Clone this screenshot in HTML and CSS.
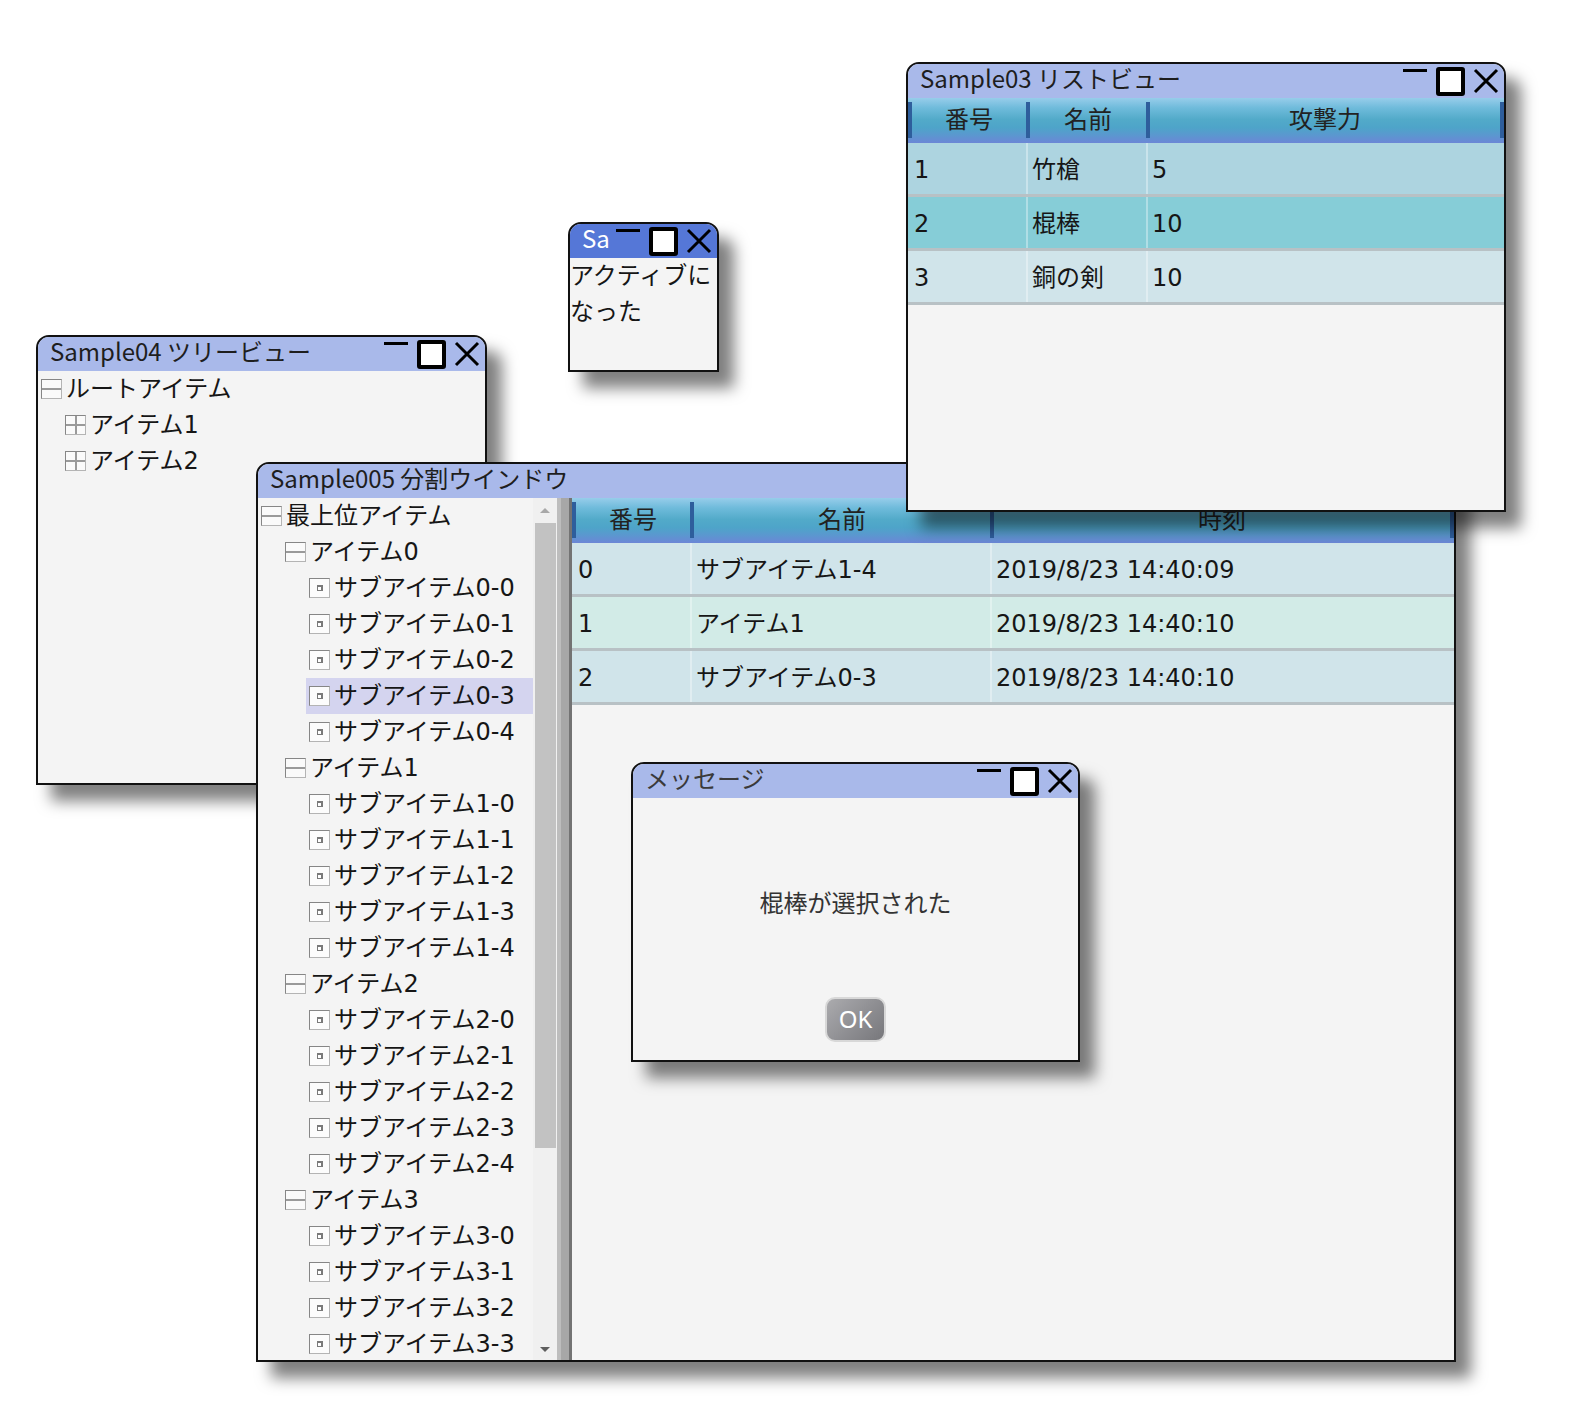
FILE: index.html
```html
<!DOCTYPE html>
<html lang="ja">
<head>
<meta charset="utf-8">
<title>Windows</title>
<link rel="stylesheet" href="styles.css">
</head>
<body>
<div class="desktop">

  <!-- Sample04 ツリービュー -->
  <section class="win w-tree">
    <header class="titlebar">
      <div class="title">Sample04 ツリービュー</div>
      <div class="ctrls"><span class="c-min"></span><span class="c-max"></span><svg class="c-close" viewBox="0 0 26 26"><path d="M2 2L24 24M24 2L2 24" stroke="#000" stroke-width="3" fill="none"/></svg></div>
    </header>
    <div class="tree-body">
      <div class="node l0"><div class="item"><span class="tbox minus"></span><span class="label">ルートアイテム</span></div></div>
      <div class="node l1"><div class="item"><span class="tbox plus"></span><span class="label">アイテム1</span></div></div>
      <div class="node l1"><div class="item"><span class="tbox plus"></span><span class="label">アイテム2</span></div></div>
    </div>
  </section>

  <!-- Sample005 分割ウインドウ -->
  <section class="win w-split">
    <header class="titlebar">
      <div class="title">Sample005 分割ウインドウ</div>
    </header>
    <div class="split-body">
      <div class="tree">
        <div class="node l0"><div class="item"><span class="tbox minus"></span><span class="label">最上位アイテム</span></div></div>
        <div class="node l1"><div class="item"><span class="tbox minus"></span><span class="label">アイテム0</span></div></div>
        <div class="node l2"><div class="item"><span class="tbox leaf"></span><span class="label">サブアイテム0-0</span></div></div>
        <div class="node l2"><div class="item"><span class="tbox leaf"></span><span class="label">サブアイテム0-1</span></div></div>
        <div class="node l2"><div class="item"><span class="tbox leaf"></span><span class="label">サブアイテム0-2</span></div></div>
        <div class="node l2"><div class="item sel"><span class="tbox leaf"></span><span class="label">サブアイテム0-3</span></div></div>
        <div class="node l2"><div class="item"><span class="tbox leaf"></span><span class="label">サブアイテム0-4</span></div></div>
        <div class="node l1"><div class="item"><span class="tbox minus"></span><span class="label">アイテム1</span></div></div>
        <div class="node l2"><div class="item"><span class="tbox leaf"></span><span class="label">サブアイテム1-0</span></div></div>
        <div class="node l2"><div class="item"><span class="tbox leaf"></span><span class="label">サブアイテム1-1</span></div></div>
        <div class="node l2"><div class="item"><span class="tbox leaf"></span><span class="label">サブアイテム1-2</span></div></div>
        <div class="node l2"><div class="item"><span class="tbox leaf"></span><span class="label">サブアイテム1-3</span></div></div>
        <div class="node l2"><div class="item"><span class="tbox leaf"></span><span class="label">サブアイテム1-4</span></div></div>
        <div class="node l1"><div class="item"><span class="tbox minus"></span><span class="label">アイテム2</span></div></div>
        <div class="node l2"><div class="item"><span class="tbox leaf"></span><span class="label">サブアイテム2-0</span></div></div>
        <div class="node l2"><div class="item"><span class="tbox leaf"></span><span class="label">サブアイテム2-1</span></div></div>
        <div class="node l2"><div class="item"><span class="tbox leaf"></span><span class="label">サブアイテム2-2</span></div></div>
        <div class="node l2"><div class="item"><span class="tbox leaf"></span><span class="label">サブアイテム2-3</span></div></div>
        <div class="node l2"><div class="item"><span class="tbox leaf"></span><span class="label">サブアイテム2-4</span></div></div>
        <div class="node l1"><div class="item"><span class="tbox minus"></span><span class="label">アイテム3</span></div></div>
        <div class="node l2"><div class="item"><span class="tbox leaf"></span><span class="label">サブアイテム3-0</span></div></div>
        <div class="node l2"><div class="item"><span class="tbox leaf"></span><span class="label">サブアイテム3-1</span></div></div>
        <div class="node l2"><div class="item"><span class="tbox leaf"></span><span class="label">サブアイテム3-2</span></div></div>
        <div class="node l2"><div class="item"><span class="tbox leaf"></span><span class="label">サブアイテム3-3</span></div></div>
      </div>
      <div class="vscroll">
        <span class="arr-up"></span>
        <span class="thumb"></span>
        <span class="spacer"></span>
        <span class="arr-down"></span>
      </div>
      <div class="splitter"></div>
      <div class="listview">
        <div class="lv-head">
          <div class="hcell s1"><span class="sep"></span><span class="hl">番号</span></div>
          <div class="hcell s2"><span class="sep"></span><span class="hl">名前</span></div>
          <div class="hcell s3"><span class="sep"></span><span class="hl">時刻</span></div>
          <span class="sep end"></span>
        </div>
        <div class="lv-row r-blue">
          <div class="cell s1">0</div><div class="cell s2">サブアイテム1-4</div><div class="cell s3">2019/8/23 14:40:09</div>
        </div>
        <div class="lv-row r-mint">
          <div class="cell s1">1</div><div class="cell s2">アイテム1</div><div class="cell s3">2019/8/23 14:40:10</div>
        </div>
        <div class="lv-row r-blue">
          <div class="cell s1">2</div><div class="cell s2">サブアイテム0-3</div><div class="cell s3">2019/8/23 14:40:10</div>
        </div>
      </div>
    </div>
  </section>

  <!-- Active small window -->
  <section class="win w-active">
    <header class="titlebar active">
      <div class="title">Sample</div>
      <div class="ctrls"><span class="c-min"></span><span class="c-max"></span><svg class="c-close" viewBox="0 0 26 26"><path d="M2 2L24 24M24 2L2 24" stroke="#000" stroke-width="3" fill="none"/></svg></div>
    </header>
    <div class="active-body">アクティブに<br>なった</div>
  </section>

  <!-- Sample03 リストビュー -->
  <section class="win w-list">
    <header class="titlebar">
      <div class="title">Sample03 リストビュー</div>
      <div class="ctrls"><span class="c-min"></span><span class="c-max"></span><svg class="c-close" viewBox="0 0 26 26"><path d="M2 2L24 24M24 2L2 24" stroke="#000" stroke-width="3" fill="none"/></svg></div>
    </header>
    <div class="listview">
      <div class="lv-head">
        <div class="hcell t1"><span class="sep"></span><span class="hl">番号</span></div>
        <div class="hcell t2"><span class="sep"></span><span class="hl">名前</span></div>
        <div class="hcell t3"><span class="sep"></span><span class="hl">攻撃力</span></div>
        <span class="sep end"></span>
      </div>
      <div class="lv-row r-sky">
        <div class="cell t1">1</div><div class="cell t2">竹槍</div><div class="cell t3">5</div>
      </div>
      <div class="lv-row r-teal">
        <div class="cell t1">2</div><div class="cell t2">棍棒</div><div class="cell t3">10</div>
      </div>
      <div class="lv-row r-blue">
        <div class="cell t1">3</div><div class="cell t2">銅の剣</div><div class="cell t3">10</div>
      </div>
    </div>
  </section>

  <!-- メッセージ dialog -->
  <section class="win w-dialog">
    <header class="titlebar">
      <div class="title dim">メッセージ</div>
      <div class="ctrls"><span class="c-min"></span><span class="c-max"></span><svg class="c-close" viewBox="0 0 26 26"><path d="M2 2L24 24M24 2L2 24" stroke="#000" stroke-width="3" fill="none"/></svg></div>
    </header>
    <div class="dlg-body">
      <div class="msg">棍棒が選択された</div>
      <div class="ok">OK</div>
    </div>
  </section>

</div>
</body>
</html>
```

FILE: styles.css
```css
* { box-sizing: border-box; }

html, body {
  margin: 0;
  padding: 0;
  background: #ffffff;
}

.desktop {
  position: relative;
  width: 1578px;
  height: 1426px;
  overflow: hidden;
  background: #ffffff;
  font-family: "DejaVu Sans", "Noto Sans CJK JP", sans-serif;
  color: #1a1a1a;
}

/* ---------- window frame ---------- */
.win {
  position: absolute;
  display: flex;
  flex-direction: column;
  border: 2px solid #111111;
  border-radius: 13px 13px 0 0;
  background: #f4f4f4;
  box-shadow: 15px 16px 15px rgba(0, 0, 0, 0.5);
}

.w-tree   { left: 36px;  top: 335px; width: 451px;  height: 450px; }
.w-split  { left: 256px; top: 462px; width: 1200px; height: 900px; }
.w-active { left: 568px; top: 222px; width: 151px;  height: 150px; }
.w-list   { left: 906px; top: 62px;  width: 600px;  height: 450px; }
.w-dialog { left: 631px; top: 762px; width: 449px;  height: 300px; }

.titlebar {
  flex: none;
  height: 34px;
  display: flex;
  border-radius: 11px 11px 0 0;
  background: #a9b9ea;
}
.titlebar.active { background: #5577d7; }

.title {
  flex: 1;
  min-width: 0;
  height: 36px;
  margin-top: -4px;
  overflow-x: clip;
  overflow-y: visible;
  white-space: nowrap;
  padding-left: 12px;
  font-family: "Noto Sans CJK JP", sans-serif;
  font-size: 24px;
  line-height: 36px;
  color: #1e1e1e;
}
.titlebar.active .title { color: #ffffff; }
.title.dim { color: #3a3a3a; }

.ctrls {
  flex: none;
  display: flex;
  align-items: flex-start;
  margin-left: 6px;
  padding-right: 5px;
}
.c-min {
  width: 24px;
  height: 3px;
  margin-top: 5px;
  background: #000000;
}
.c-max {
  width: 29px;
  height: 29px;
  margin-top: 3px;
  margin-left: 9px;
  border: 4px solid #000000;
  border-radius: 3px;
  background: #ffffff;
}
.c-close {
  width: 26px;
  height: 26px;
  margin-top: 4px;
  margin-left: 8px;
}

/* ---------- tree ---------- */
.tree-body,
.tree {
  font-size: 24px;
  color: #161616;
}
.tree {
  flex: none;
  width: 275px;
  overflow: hidden;
}
.node {
  display: flex;
  height: 36px;
}
.l1 { padding-left: 24px; }
.l2 { padding-left: 48px; }

.item {
  flex: 1;
  display: flex;
  align-items: center;
  padding-left: 3px;
  white-space: nowrap;
}
.item.sel { background: #d4d4ef; }

.label { line-height: 36px; }

.tbox {
  flex: none;
  width: 21px;
  height: 20px;
  margin-right: 4px;
  border: 1px solid #868686;
  border-right-color: #b4b4b4;
  border-bottom-color: #b4b4b4;
  background-color: #fafafa;
}
.tbox.minus {
  background: linear-gradient(#9a9a9a, #9a9a9a) center / 100% 2px no-repeat, #fafafa;
}
.tbox.plus {
  background:
    linear-gradient(#9a9a9a, #9a9a9a) center / 100% 2px no-repeat,
    linear-gradient(#9a9a9a, #9a9a9a) center / 2px 100% no-repeat,
    #fafafa;
}
.tbox.leaf {
  background:
    linear-gradient(#ffffff, #ffffff) center / 3px 3px no-repeat,
    linear-gradient(#7a7a7a, #7a7a7a) center / 6px 6px no-repeat,
    #fcfcfc;
}

/* ---------- split window body ---------- */
.split-body {
  flex: 1;
  min-height: 0;
  display: flex;
  overflow: hidden;
}
.vscroll {
  flex: none;
  width: 24px;
  display: flex;
  flex-direction: column;
  align-items: center;
  background: #f0f0f0;
}
.arr-up {
  width: 0;
  height: 0;
  margin-top: 10px;
  border-left: 5px solid transparent;
  border-right: 5px solid transparent;
  border-bottom: 5px solid #a8a8a8;
}
.thumb {
  width: 21px;
  height: 625px;
  margin-top: 10px;
  background: #c2c2c2;
}
.spacer { flex: 1; }
.arr-down {
  width: 0;
  height: 0;
  margin-bottom: 8px;
  border-left: 5px solid transparent;
  border-right: 5px solid transparent;
  border-top: 5px solid #5e5e5e;
}
.splitter {
  flex: none;
  width: 15px;
  background: linear-gradient(to right, #bdbdbd 0, #bdbdbd 4px, #a7a7a7 4px, #a7a7a7 12px, #737373 12px);
}

/* ---------- list view ---------- */
.listview {
  flex: 1;
  min-width: 0;
  display: flex;
  flex-direction: column;
}
.lv-head {
  flex: none;
  height: 45px;
  display: flex;
  background: linear-gradient(#97cdea 0%, #6fbbdb 22%, #52aac9 48%, #4ea4c9 66%, #5a98cf 82%, #6c86d6 100%);
}
.hcell {
  display: flex;
  align-items: stretch;
}
.sep {
  flex: none;
  width: 4px;
  margin: 4px 0 5px;
  background: #2e5e9c;
}
.hl {
  flex: 1;
  text-align: center;
  font-family: "Noto Sans CJK JP", sans-serif;
  font-size: 24px;
  line-height: 40px;
  color: #222222;
}

.s1 { flex: none; width: 118px; }
.s2 { flex: none; width: 300px; }
.s3 { flex: 1; }
.t1 { flex: none; width: 118px; }
.t2 { flex: none; width: 120px; }
.t3 { flex: 1; }

.lv-row {
  flex: none;
  height: 54px;
  display: flex;
  border-bottom: 3px solid #b8c1c5;
}
.r-blue { background: #d0e4ea; }
.r-mint { background: #d2ebe7; }
.r-sky  { background: #add4e0; }
.r-teal { background: #86cdd7; }

.cell {
  padding-left: 6px;
  padding-top: 3px;
  font-size: 24px;
  line-height: 48px;
  white-space: nowrap;
  color: #161616;
}
.cell + .cell {
  border-left: 2px solid rgba(255, 255, 255, 0.35);
  padding-left: 4px;
}

/* ---------- active small window ---------- */
.active-body {
  font-size: 24px;
  line-height: 36px;
  white-space: nowrap;
  color: #161616;
}

/* ---------- dialog ---------- */
.dlg-body {
  flex: 1;
  display: flex;
  flex-direction: column;
  align-items: center;
}
.msg {
  margin-top: 86px;
  font-family: "Noto Sans CJK JP", sans-serif;
  font-size: 24px;
  line-height: 36px;
  color: #333333;
}
.ok {
  margin-top: 77px;
  width: 61px;
  height: 45px;
  border: 2px solid #d8d8d8;
  border-radius: 10px;
  background: linear-gradient(135deg, #ababae 0%, #8e8e92 55%, #77777b 100%);
  color: #ffffff;
  font-family: "Noto Sans", sans-serif;
  font-size: 24px;
  line-height: 40px;
  text-align: center;
}
```
